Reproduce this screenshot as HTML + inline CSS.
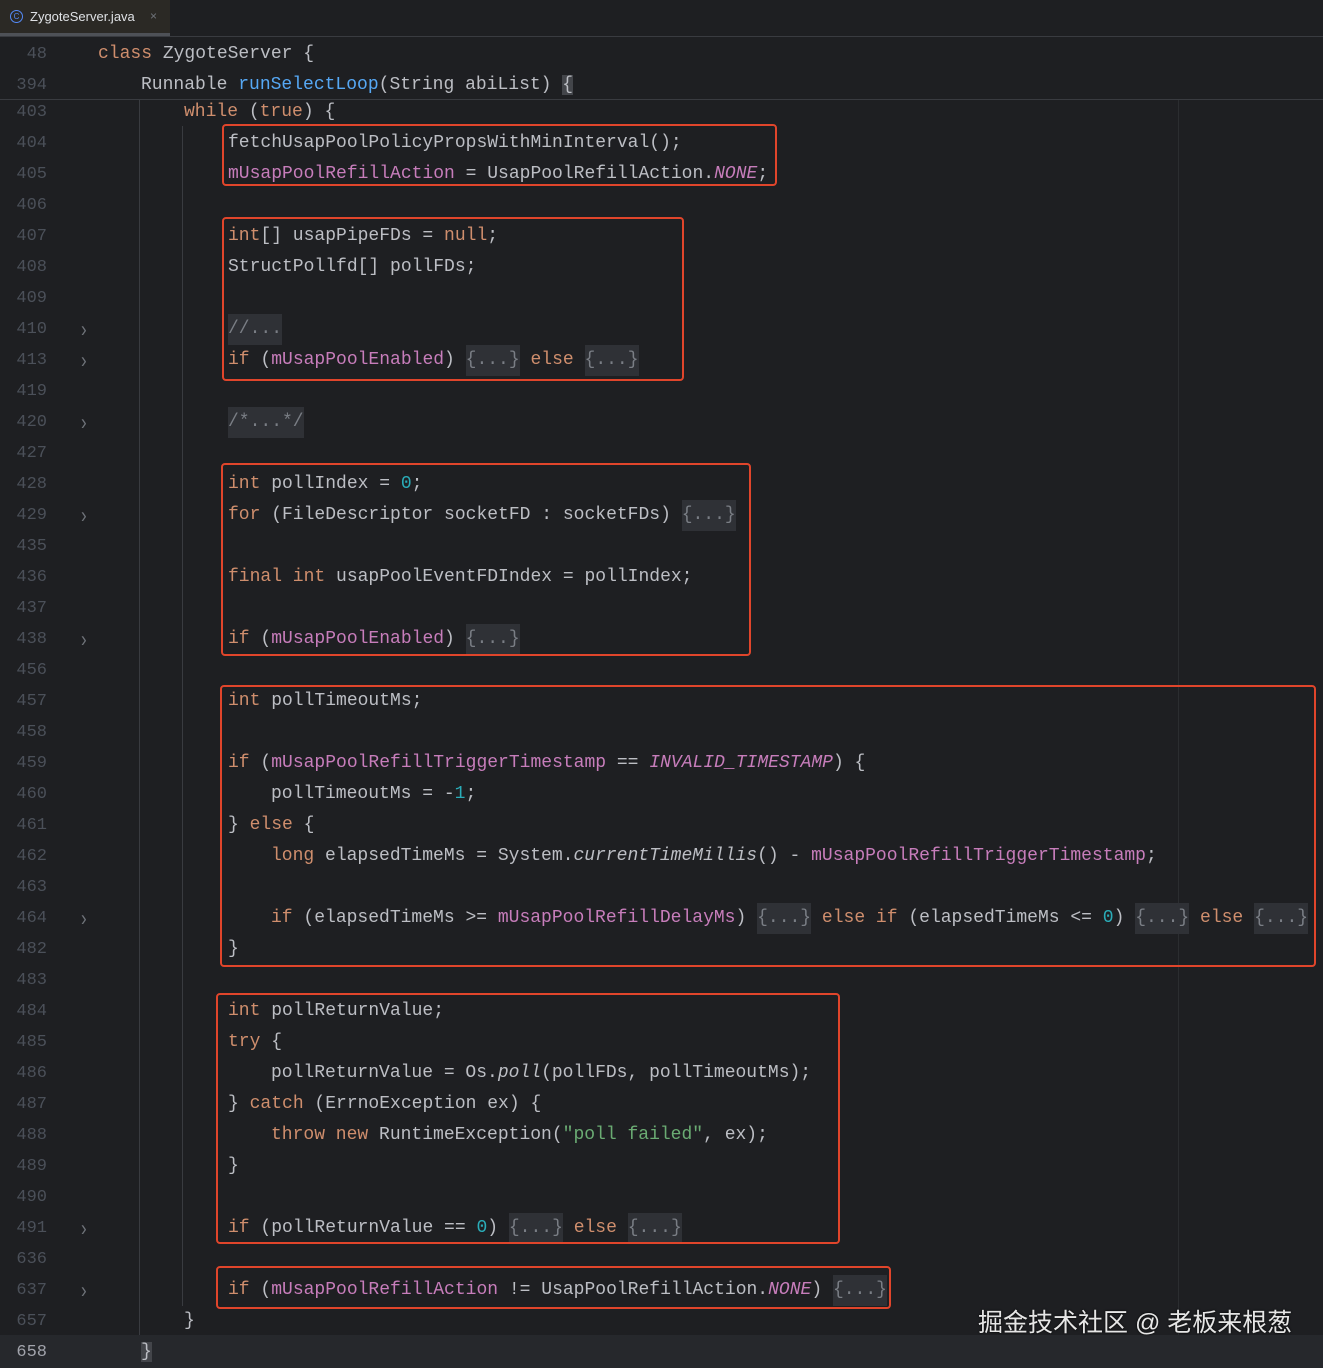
<!DOCTYPE html>
<html><head><meta charset="utf-8"><style>
body{margin:0;width:1323px;height:1368px;background:#1e1f22;overflow:hidden;position:relative;font-family:"Liberation Mono",monospace}
.tabbar{position:absolute;left:0;top:0;width:1323px;height:36px;background:#1e1f22;border-bottom:1px solid #393b40}
.tab{position:absolute;left:0;top:0;width:170px;height:33px;background:#2b2925;border-bottom:3px solid #4e5157;font:13px "Liberation Sans",sans-serif;color:#dfe1e5;line-height:33px}
.tab .ic{position:absolute;left:10px;top:10px;width:11px;height:11px;border:1.3px solid #548af7;border-radius:50%;font-size:8px;line-height:11px;text-align:center;color:#548af7}
.tab .nm{position:absolute;left:30px}
.tab .x{position:absolute;left:150px;color:#6f737a;font-size:12px}
.sticky{position:absolute;left:0;top:37px;width:1323px;height:62px;background:#1e1f22;border-bottom:1px solid #393b40;z-index:2}
.l{position:absolute;left:0;height:31px;line-height:31px;width:1323px;font-size:18px;color:#bcbec4;white-space:pre}
.n,.t,.a{top:2px}
.n{position:absolute;right:1276px;font-size:17px;color:#4b5059}
.a{position:absolute;left:81px;color:#6f737a;font-family:"Liberation Sans",sans-serif;font-size:17px;transform:scaleY(1.3)}
.t{position:absolute}
.k{color:#cf8e6d}.f{color:#c77dbb}.m{color:#56a8f5}.d{color:#2aacb8}.s{color:#6aab73}
.ci{color:#c77dbb;font-style:italic}.i{font-style:italic}
.fo{background:#2f3136;color:#7a7e85;display:inline-block;height:31px}
.box{position:absolute;border:2.5px solid #e0452b;border-radius:4px;box-sizing:border-box}
.g{position:absolute;width:1px;background:#393b40}
</style></head><body>
<div class="tabbar"><div class="tab"><span class="ic">C</span><span class="nm">ZygoteServer.java</span><span class="x">×</span></div></div>

<div class="sticky">
<div class="l" style="top:0px"><span class="n">48</span><span class="t" style="left:98px"><span class="k">class</span> ZygoteServer {</span></div>
<div class="l" style="top:31px"><span class="n">394</span><span class="t" style="left:141px">Runnable <span class="m">runSelectLoop</span>(String abiList) <span style="background:#43454a">{</span></span></div>
</div>

<div class="g" style="left:139px;top:99px;height:1237px"></div>
<div class="g" style="left:182px;top:126px;height:1180px"></div>
<div class="g" style="left:1178px;top:99px;height:1269px;background:#2b2d30"></div>
<div style="position:absolute;left:0;top:1335px;width:1323px;height:33px;background:#26282c"></div>

<div class="l" style="top:95px"><span class="n">403</span><span class="t" style="left:184px"><span class="k">while</span> (<span class="k">true</span>) {</span></div>
<div class="l" style="top:126px"><span class="n">404</span><span class="t" style="left:228px">fetchUsapPoolPolicyPropsWithMinInterval();</span></div>
<div class="l" style="top:157px"><span class="n">405</span><span class="t" style="left:228px"><span class="f">mUsapPoolRefillAction</span> = UsapPoolRefillAction.<span class="ci">NONE</span>;</span></div>
<div class="l" style="top:188px"><span class="n">406</span></div>
<div class="l" style="top:219px"><span class="n">407</span><span class="t" style="left:228px"><span class="k">int</span>[] usapPipeFDs = <span class="k">null</span>;</span></div>
<div class="l" style="top:250px"><span class="n">408</span><span class="t" style="left:228px">StructPollfd[] pollFDs;</span></div>
<div class="l" style="top:281px"><span class="n">409</span></div>
<div class="l" style="top:312px"><span class="n">410</span><span class="a">›</span><span class="t" style="left:228px"><span class="fo">//...</span></span></div>
<div class="l" style="top:343px"><span class="n">413</span><span class="a">›</span><span class="t" style="left:228px"><span class="k">if</span> (<span class="f">mUsapPoolEnabled</span>) <span class="fo">{...}</span> <span class="k">else</span> <span class="fo">{...}</span></span></div>
<div class="l" style="top:374px"><span class="n">419</span></div>
<div class="l" style="top:405px"><span class="n">420</span><span class="a">›</span><span class="t" style="left:228px"><span class="fo">/*...*/</span></span></div>
<div class="l" style="top:436px"><span class="n">427</span></div>
<div class="l" style="top:467px"><span class="n">428</span><span class="t" style="left:228px"><span class="k">int</span> pollIndex = <span class="d">0</span>;</span></div>
<div class="l" style="top:498px"><span class="n">429</span><span class="a">›</span><span class="t" style="left:228px"><span class="k">for</span> (FileDescriptor socketFD : socketFDs) <span class="fo">{...}</span></span></div>
<div class="l" style="top:529px"><span class="n">435</span></div>
<div class="l" style="top:560px"><span class="n">436</span><span class="t" style="left:228px"><span class="k">final int</span> usapPoolEventFDIndex = pollIndex;</span></div>
<div class="l" style="top:591px"><span class="n">437</span></div>
<div class="l" style="top:622px"><span class="n">438</span><span class="a">›</span><span class="t" style="left:228px"><span class="k">if</span> (<span class="f">mUsapPoolEnabled</span>) <span class="fo">{...}</span></span></div>
<div class="l" style="top:653px"><span class="n">456</span></div>
<div class="l" style="top:684px"><span class="n">457</span><span class="t" style="left:228px"><span class="k">int</span> pollTimeoutMs;</span></div>
<div class="l" style="top:715px"><span class="n">458</span></div>
<div class="l" style="top:746px"><span class="n">459</span><span class="t" style="left:228px"><span class="k">if</span> (<span class="f">mUsapPoolRefillTriggerTimestamp</span> == <span class="ci">INVALID_TIMESTAMP</span>) {</span></div>
<div class="l" style="top:777px"><span class="n">460</span><span class="t" style="left:271px">pollTimeoutMs = -<span class="d">1</span>;</span></div>
<div class="l" style="top:808px"><span class="n">461</span><span class="t" style="left:228px">} <span class="k">else</span> {</span></div>
<div class="l" style="top:839px"><span class="n">462</span><span class="t" style="left:271px"><span class="k">long</span> elapsedTimeMs = System.<span class="i">currentTimeMillis</span>() - <span class="f">mUsapPoolRefillTriggerTimestamp</span>;</span></div>
<div class="l" style="top:870px"><span class="n">463</span></div>
<div class="l" style="top:901px"><span class="n">464</span><span class="a">›</span><span class="t" style="left:271px"><span class="k">if</span> (elapsedTimeMs &gt;= <span class="f">mUsapPoolRefillDelayMs</span>) <span class="fo">{...}</span> <span class="k">else if</span> (elapsedTimeMs &lt;= <span class="d">0</span>) <span class="fo">{...}</span> <span class="k">else</span> <span class="fo">{...}</span></span></div>
<div class="l" style="top:932px"><span class="n">482</span><span class="t" style="left:228px">}</span></div>
<div class="l" style="top:963px"><span class="n">483</span></div>
<div class="l" style="top:994px"><span class="n">484</span><span class="t" style="left:228px"><span class="k">int</span> pollReturnValue;</span></div>
<div class="l" style="top:1025px"><span class="n">485</span><span class="t" style="left:228px"><span class="k">try</span> {</span></div>
<div class="l" style="top:1056px"><span class="n">486</span><span class="t" style="left:271px">pollReturnValue = Os.<span class="i">poll</span>(pollFDs, pollTimeoutMs);</span></div>
<div class="l" style="top:1087px"><span class="n">487</span><span class="t" style="left:228px">} <span class="k">catch</span> (ErrnoException ex) {</span></div>
<div class="l" style="top:1118px"><span class="n">488</span><span class="t" style="left:271px"><span class="k">throw new</span> RuntimeException(<span class="s">"poll failed"</span>, ex);</span></div>
<div class="l" style="top:1149px"><span class="n">489</span><span class="t" style="left:228px">}</span></div>
<div class="l" style="top:1180px"><span class="n">490</span></div>
<div class="l" style="top:1211px"><span class="n">491</span><span class="a">›</span><span class="t" style="left:228px"><span class="k">if</span> (pollReturnValue == <span class="d">0</span>) <span class="fo">{...}</span> <span class="k">else</span> <span class="fo">{...}</span></span></div>
<div class="l" style="top:1242px"><span class="n">636</span></div>
<div class="l" style="top:1273px"><span class="n">637</span><span class="a">›</span><span class="t" style="left:228px"><span class="k">if</span> (<span class="f">mUsapPoolRefillAction</span> != UsapPoolRefillAction.<span class="ci">NONE</span>) <span class="fo">{...}</span></span></div>
<div class="l" style="top:1304px"><span class="n">657</span><span class="t" style="left:184px">}</span></div>
<div class="l" style="top:1335px"><span class="n" style="color:#a1a3ab">658</span><span class="t" style="left:141px"><span style="background:#43454a">}</span></span></div>

<div class="box" style="left:222px;top:124px;width:555px;height:62px"></div>
<div class="box" style="left:222px;top:217px;width:462px;height:164px"></div>
<div class="box" style="left:221px;top:463px;width:530px;height:193px"></div>
<div class="box" style="left:220px;top:685px;width:1096px;height:282px"></div>
<div class="box" style="left:216px;top:993px;width:624px;height:251px"></div>
<div class="box" style="left:216px;top:1266px;width:675px;height:43px"></div>

<div style="position:absolute;left:978px;top:1303px;font:25px 'Liberation Sans','Noto Sans CJK SC',sans-serif;color:#e6e6e6;text-shadow:0 0 2px #000">掘金技术社区 @ 老板来根葱</div>
</body></html>
